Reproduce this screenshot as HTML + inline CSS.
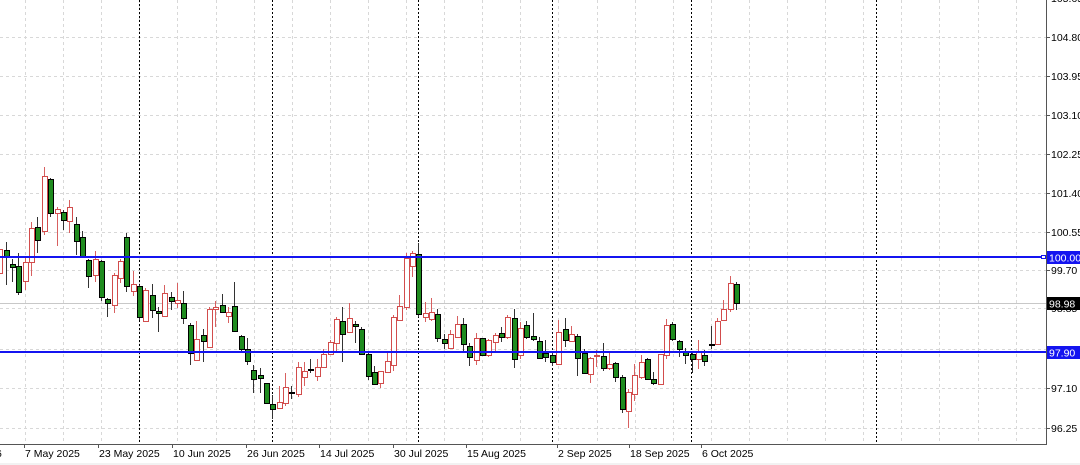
<!DOCTYPE html>
<html><head><meta charset="utf-8">
<style>
html,body{margin:0;padding:0;background:#fff;}
body{width:1080px;height:465px;overflow:hidden;position:relative;font-family:"Liberation Sans",sans-serif;}
svg{position:absolute;left:0;top:0;}
</style></head>
<body>
<svg id="s" width="1080" height="465" xmlns="http://www.w3.org/2000/svg" font-family="'Liberation Sans',sans-serif" font-size="10.5">
<rect x="0" y="0" width="1080" height="465" fill="#fff"/>
<rect x="0" y="463" width="1080" height="2" fill="#f2f2f2"/>
<g id="grid"></g>
<g id="vd" stroke="#000" stroke-width="1" stroke-dasharray="2,2">
<line x1="139.5" y1="0" x2="139.5" y2="444"/>
<line x1="272.5" y1="0" x2="272.5" y2="444"/>
<line x1="418.5" y1="0" x2="418.5" y2="444"/>
<line x1="552.5" y1="0" x2="552.5" y2="444"/>
<line x1="691.5" y1="0" x2="691.5" y2="444"/>
<line x1="876.5" y1="0" x2="876.5" y2="444"/>
</g>
<line x1="0" y1="303.5" x2="1046" y2="303.5" stroke="#c8c8c8" stroke-width="1"/>
<g id="c"></g>
<line x1="0" y1="257" x2="1046" y2="257" stroke="#1414f0" stroke-width="2"/>
<line x1="0" y1="352" x2="1046" y2="352" stroke="#1414f0" stroke-width="2"/>
<rect x="1041.5" y="255.5" width="4" height="3" fill="#fff" stroke="#1414f0" stroke-width="1"/>
<line x1="1046.5" y1="0" x2="1046.5" y2="444" stroke="#555" stroke-width="1"/>
<line x1="0" y1="444.5" x2="1047" y2="444.5" stroke="#555" stroke-width="1"/>
<g id="ax" fill="#000"></g>
<rect x="1047" y="251" width="33" height="13" fill="#1414f0"/>
<text x="1049" y="261.5" fill="#fff">100.00</text>
<rect x="1047" y="297" width="33" height="13" fill="#000"/>
<text x="1049" y="307.5" fill="#fff">98.98</text>
<rect x="1047" y="346" width="33" height="13" fill="#1414f0"/>
<text x="1049" y="356.5" fill="#fff">97.90</text>
</svg>
<script>
var NS="http://www.w3.org/2000/svg";
function el(p,n,a,t){var e=document.createElementNS(NS,n);for(var k in a)e.setAttribute(k,a[k]);if(t)e.textContent=t;p.appendChild(e);return e;}
var g=document.getElementById('grid');
var hy=[37,76,115,154,193,232,270,308,349,388,428];
hy.forEach(function(y){el(g,'line',{x1:0,y1:y+.5,x2:1046,y2:y+.5,stroke:'#d8d8d8','stroke-dasharray':'3,3'});});
for(var k=0;k<=26;k++){var x=Math.round(25+38.1*k)+.5;el(g,'line',{x1:x,y1:0,x2:x,y2:444,stroke:'#d8d8d8','stroke-dasharray':'3,3'});}
var ax=document.getElementById('ax');
var lab=[[-2,'105.65'],[37,'104.80'],[76,'103.95'],[115,'103.10'],[154,'102.25'],[193,'101.40'],[232,'100.55'],[270,'99.70'],[308,'98.85'],[349,'98.00'],[388,'97.10'],[428,'96.25']];
lab.forEach(function(l){el(ax,'line',{x1:1046,y1:l[0]+.5,x2:1050,y2:l[0]+.5,stroke:'#555'});el(ax,'text',{x:1051,y:l[0]+4},l[1]);});
var dates=[[-30,'6'],[24,'7 May 2025'],[98,'23 May 2025'],[172,'10 Jun 2025'],[246,'26 Jun 2025'],[319,'14 Jul 2025'],[393,'30 Jul 2025'],[466,'15 Aug 2025'],[557,'2 Sep 2025'],[629,'18 Sep 2025'],[701,'6 Oct 2025']];
dates.forEach(function(d){el(ax,'line',{x1:d[0]+.5,y1:444,x2:d[0]+.5,y2:448,stroke:'#555'});el(ax,'text',{x:d[1]=='6'?-4:d[0]+1,y:457},d[1]);});
var D=[
['r',249,273,247,275],['g',250,257,242,285],['g',264,267,259,282],['g',266,292,253,295],['r',262,281,258,290],['r',228,262,222,276],['g',227,240,217,253],['r',176,231,167,235],['g',179,213,178,217],['r',209,213,207,246],['g',212,220,210,230],['r',207,221,200,233],['g',224,241,217,255],['g',237,257,231,257],['g',260,276,259,288],['r',259,275,251,282],['g',261,297,260,301],['g',299,303,298,317],['r',275,305,273,313],['r',261,278,259,283],['g',237,286,233,292],['r',284,291,271,296],['g',286,317,285,320],['r',290,321,288,322],['g',295,310,284,318],['g',311,313,307,332],['r',293,316,285,317],['g',297,301,292,310],['r',300,303,283,308],['g',303,318,291,324],['g',325,353,323,365],['r',339,360,321,361],['g',335,341,329,362],['r',309,347,307,348],['r',307,309,301,327],['g',305,312,294,313],['r',312,316,307,323],['g',306,331,282,332],['g',336,349,335,352],['g',349,361,338,365],
['g',370,379,365,393],['g',375,378,368,393],['g',383,403,383,403],['g',404,409,395,419],['r',402,408,386,409],['r',387,403,373,406],['g',392,393,386,399],['r',367,394,362,397],['r',371,377,362,386],['g',369,370,359,373],['r',367,376,359,381],['r',354,367,349,367],['r',342,354,340,355],['r',319,343,317,351],['g',321,334,307,362],['r',318,332,303,333],['g',324,326,321,343],['g',329,354,327,354],['g',354,376,351,380],['g',372,384,366,385],['r',371,383,371,388],['r',361,372,352,373],['r',317,365,315,371],['r',306,320,295,321],['r',258,307,253,310],['r',253,266,251,277],['g',254,314,243,317],['r',313,317,302,322],['r',312,319,298,321],['g',314,338,309,342],['g',339,343,334,349],['r',334,348,330,349],['r',324,337,316,337],['g',324,344,318,353],['g',346,357,343,366],['r',338,360,333,365],['g',338,355,338,356],['r',340,355,339,357],['r',335,342,333,352],
['g',333,337,327,342],['r',317,337,315,339],['g',318,359,309,368],['r',328,355,322,359],['g',325,337,321,339],['g',336,339,313,341],['g',341,358,337,359],['g',353,357,340,362],['g',355,362,352,366],['r',332,364,320,364],['g',329,340,318,347],['r',334,341,326,342],['g',336,358,334,376],['g',353,373,349,374],['r',358,374,357,383],['r',355,356,350,367],['g',356,368,343,371],['r',364,368,353,370],['g',363,377,362,382],['g',377,409,375,413],['r',392,411,389,428],['r',375,394,364,401],['r',362,377,355,379],['g',359,379,358,380],['g',379,383,372,385],['r',354,384,354,384],['r',325,355,319,359],['g',324,339,322,341],['g',341,349,340,357],['g',351,355,348,364],['g',354,359,353,373],['r',352,359,340,369],['g',355,361,350,366],['g',344,345,326,349],['r',321,344,318,344],['r',309,320,300,321],['r',283,309,276,312],['g',284,303,282,310]
];
var c=document.getElementById('c');
D.forEach(function(d,j){var i=j-1;var x=Math.round(5.7+6.35*i);var cx=x+.5;
var col=d[0]=='g'?'#000':'#d24c4c';
el(c,'line',{x1:cx,y1:d[3],x2:cx,y2:d[4],stroke:d[0]=='g'?'#333':'#d86060','stroke-width':1});
var h=Math.max(1,d[2]-d[1]);
el(c,'rect',{x:x-2+.5,y:d[1]+.5,width:5,height:h,fill:d[0]=='g'?'#1f8c1f':'#fff',stroke:col,'stroke-width':1});
});
</script>
</body></html>
